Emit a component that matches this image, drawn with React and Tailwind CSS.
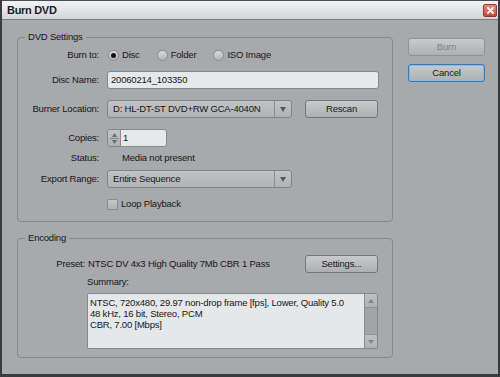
import React from "react";

function Button({ children, className = "", disabled }) {
  return (
    <div
      className={
        "h-[18px] flex items-center justify-center rounded-[3px] border bg-gradient-to-b from-[#c9cacd] to-[#aeafb2] " +
        (disabled ? "text-[#808185] border-[#909195] " : "border-[#76777b] ") +
        className
      }
    >
      {children}
    </div>
  );
}

function Radio({ checked, label }) {
  return (
    <div className="flex items-center gap-[3px]">
      <div className="w-[11px] h-[11px] rounded-full border border-[#8a8b8f] bg-gradient-to-b from-[#d9dadd] to-[#b3b4b7] flex items-center justify-center">
        {checked && <div className="w-[5px] h-[5px] rounded-full bg-[#111]" />}
      </div>
      <span>{label}</span>
    </div>
  );
}

function Select({ value }) {
  return (
    <div className="w-[185px] h-[18px] flex rounded-[3px] border border-[#828387] bg-gradient-to-b from-[#c2c3c6] to-[#b1b2b5]">
      <div className="flex-1 flex items-center pl-[5px]">{value}</div>
      <div className="w-[17px] border-l border-[#8a8b8f] flex items-center justify-center">
        <svg width="6" height="5" viewBox="0 0 6 5">
          <path d="M0 0 L6 0 L3 5 Z" fill="#55565a" />
        </svg>
      </div>
    </div>
  );
}

function Row({ label, children, className = "", labelW = "w-[82px]" }) {
  return (
    <div className={"flex items-center " + className}>
      <div className={labelW + " text-right pr-[1px]"}>{label}</div>
      <div className="ml-[7px] flex items-center">{children}</div>
    </div>
  );
}

export default function App() {
  return (
    <div className="w-[500px] h-[377px] bg-[#a8a9ad] flex flex-col font-['Liberation_Sans',Arial,sans-serif] text-[9.5px] tracking-[-0.2px] text-[#161616] border-l-2 border-r-2 border-b-[3px] border-[#3a3b3f] overflow-hidden">
      <div className="h-[20px] shrink-0 flex items-center justify-between pl-[5px] pr-[1px] border-t border-[#4a4b4f] border-b border-b-[#7c7d81] bg-gradient-to-b from-[#f1f3f6] to-[#d3d5d9]">
        <span className="font-bold text-[11px] tracking-[-0.3px] text-[#1c1c1c]">Burn DVD</span>
        <div className="w-[14px] h-[13px] rounded-[2px] border border-[#8f3b33] bg-gradient-to-b from-[#e98a7c] to-[#c9473a] flex items-center justify-center">
          <svg width="7" height="7" viewBox="0 0 7 7">
            <path d="M1 1 L6 6 M6 1 L1 6" stroke="#fff" strokeWidth="1.8" strokeLinecap="round" />
          </svg>
        </div>
      </div>

      <div className="flex flex-1 pl-[15px]">
        <div className="w-[376px] flex flex-col">
          <fieldset className="mt-[11px] border border-[#86878b] rounded-[4px] px-0 pb-[11px] flex flex-col">
            <legend className="ml-[7px] px-[3px] leading-[12px]">DVD Settings</legend>
            <Row label="Burn to:" className="mt-[5px] h-[14px]">
              <div className="flex items-center gap-[17px] pl-[1px]">
                <Radio checked label="Disc" />
                <Radio label="Folder" />
                <Radio label="ISO Image" />
              </div>
            </Row>
            <Row label="Disc Name:" className="mt-[9px]">
              <div className="w-[272px] h-[18px] rounded-[3px] border border-[#86878b] bg-[#e7e8ea] flex items-center pl-[3px]">
                20060214_103350
              </div>
            </Row>
            <Row label="Burner Location:" className="mt-[11px]">
              <Select value="D: HL-DT-ST DVD+RW GCA-4040N" />
              <Button className="w-[73px] ml-[13px]">Rescan</Button>
            </Row>
            <Row label="Copies:" className="mt-[11px]">
              <div className="w-[60px] h-[18px] flex rounded-[3px] border border-[#86878b] overflow-hidden">
                <div className="w-[13px] bg-gradient-to-b from-[#c4c5c8] to-[#aeafb2] border-r border-[#8a8b8f] flex flex-col items-center justify-center gap-[1px]">
                  <svg width="5" height="4" viewBox="0 0 5 4"><path d="M0 4 L5 4 L2.5 0 Z" fill="#6a6b6f" /></svg>
                  <div className="w-[9px] h-px bg-[#8a8b8f]" />
                  <svg width="5" height="4" viewBox="0 0 5 4"><path d="M0 0 L5 0 L2.5 4 Z" fill="#6a6b6f" /></svg>
                </div>
                <div className="flex-1 bg-[#e7e8ea] flex items-center pl-[2px]">1</div>
              </div>
            </Row>
            <Row label="Status:" className="mt-[5px] h-[12px]">
              <span className="ml-[15px]">Media not present</span>
            </Row>
            <Row label="Export Range:" className="mt-[6px]">
              <Select value="Entire Sequence" />
            </Row>
            <Row label="" className="mt-[10px] h-[12px]">
              <div className="flex items-center gap-[3px]">
                <div className="w-[11px] h-[11px] rounded-[1px] border border-[#8a8b8f] bg-gradient-to-b from-[#c6c7ca] to-[#b2b3b6]" />
                <span>Loop Playback</span>
              </div>
            </Row>
          </fieldset>

          <fieldset className="mt-[10px] border border-[#86878b] rounded-[4px] px-0 pb-[8px] flex flex-col">
            <legend className="ml-[7px] px-[3px] leading-[12px]">Encoding</legend>
            <div className="flex items-center mt-[11px]">
              <div className="w-[67px] text-right">Preset:</div>
              <div className="ml-[3px] flex-1">NTSC DV 4x3 High Quality 7Mb CBR 1 Pass</div>
              <Button className="w-[73px] mr-[14px]">Settings...</Button>
            </div>
            <div className="ml-[69px] mt-[3px] h-[12px] flex items-center">Summary:</div>
            <div className="ml-[69px] mt-[5px] w-[291px] h-[56px] flex rounded-[2px] border border-[#86878b] overflow-hidden">
              <div className="flex-1 bg-[#e6e7e9] pl-[2px] pt-[3px] leading-[11px]">
                <div>NTSC, 720x480, 29.97 non-drop frame [fps], Lower, Quality 5.0</div>
                <div>48 kHz, 16 bit, Stereo, PCM</div>
                <div>CBR, 7.00 [Mbps]</div>
              </div>
              <div className="w-[13px] bg-[#a3a4a8] border-l border-[#8a8b8f] flex flex-col justify-between">
                <div className="h-[14px] bg-gradient-to-b from-[#bfc0c3] to-[#afb0b3] border-b border-[#909195] flex items-center justify-center">
                  <svg width="6" height="4" viewBox="0 0 6 4"><path d="M0 4 L6 4 L3 0 Z" fill="#85868a" /></svg>
                </div>
                <div className="h-[14px] bg-gradient-to-b from-[#bfc0c3] to-[#afb0b3] border-t border-[#909195] flex items-center justify-center">
                  <svg width="6" height="4" viewBox="0 0 6 4"><path d="M0 0 L6 0 L3 4 Z" fill="#85868a" /></svg>
                </div>
              </div>
            </div>
          </fieldset>
        </div>

        <div className="ml-[15px] flex flex-col">
          <Button disabled className="w-[77px] mt-[18px]">Burn</Button>
          <Button className="w-[77px] mt-[8px] !border-[#3c78b0] shadow-[inset_0_0_0_1px_#8fb6dc]">Cancel</Button>
        </div>
      </div>
    </div>
  );
}
